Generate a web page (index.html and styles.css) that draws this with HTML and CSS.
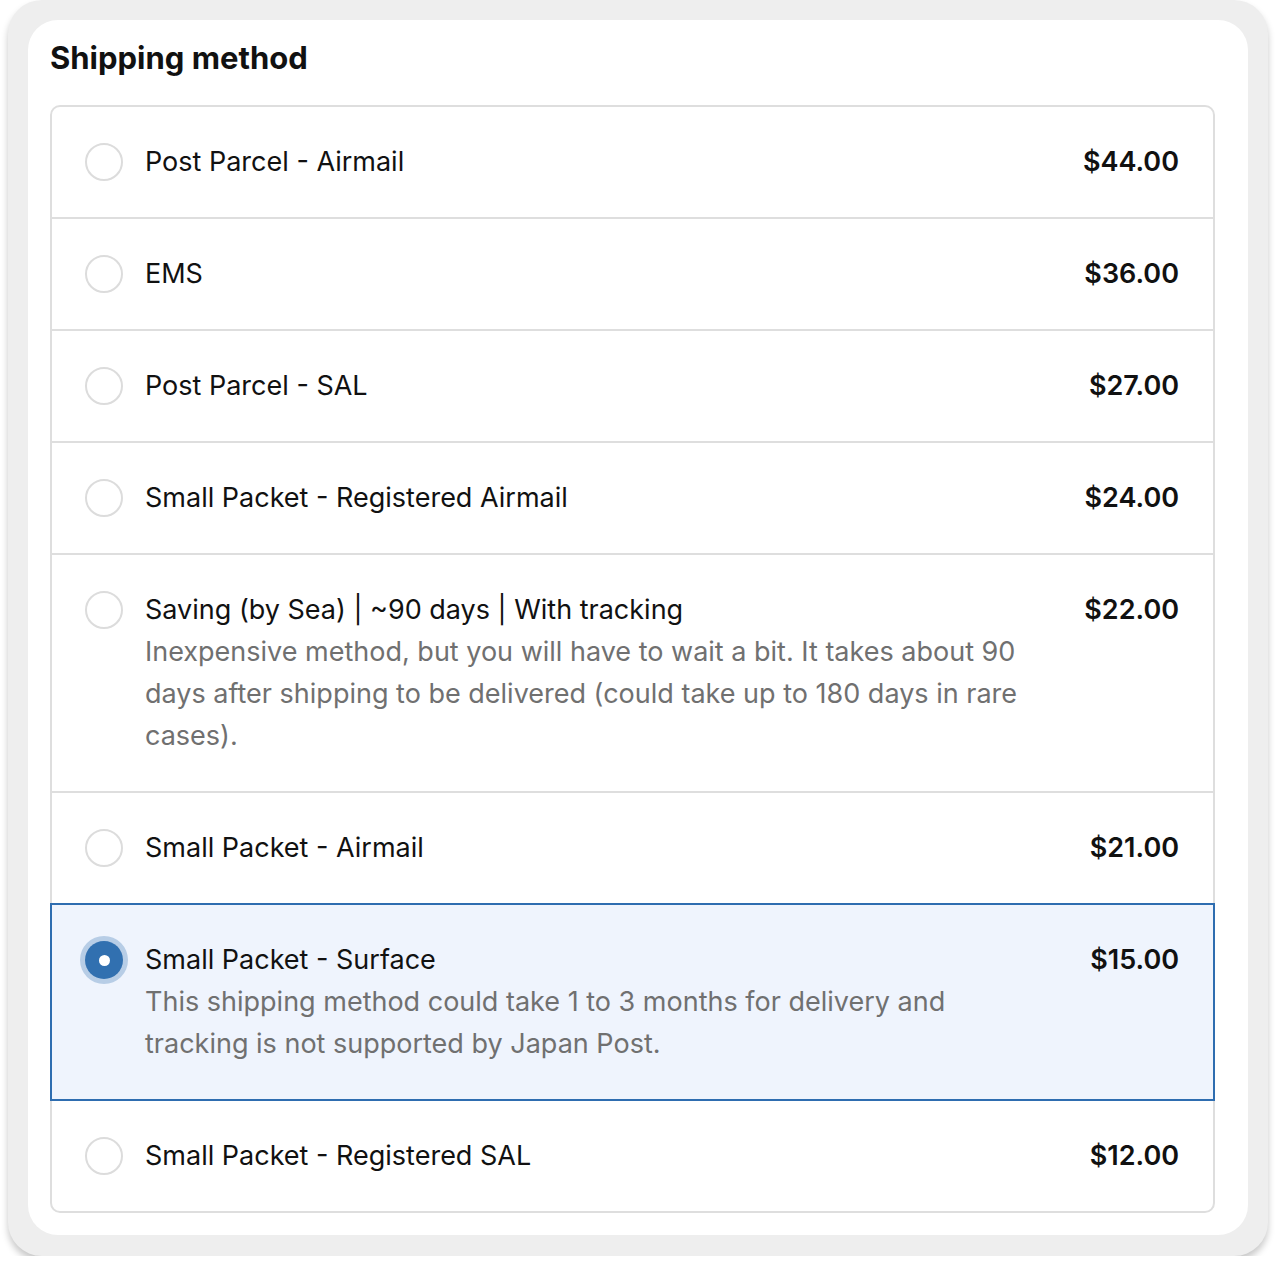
FILE: index.html
```html
<!DOCTYPE html>
<html lang="en">
<head>
<meta charset="utf-8">
<title>Shipping method</title>
<link rel="stylesheet" href="styles.css">
</head>
<body>
<div class="frame">
  <div class="card">
    <h2 class="title">Shipping method</h2>
    <div class="list">
      <div class="row"><span class="radio"></span><div class="info"><div class="name">Post Parcel - Airmail</div></div><div class="price">$44.00</div></div>
      <div class="row"><span class="radio"></span><div class="info"><div class="name">EMS</div></div><div class="price">$36.00</div></div>
      <div class="row"><span class="radio"></span><div class="info"><div class="name">Post Parcel - SAL</div></div><div class="price">$27.00</div></div>
      <div class="row"><span class="radio"></span><div class="info"><div class="name">Small Packet - Registered Airmail</div></div><div class="price">$24.00</div></div>
      <div class="row"><span class="radio"></span><div class="info"><div class="name">Saving (by Sea) | ~90 days | With tracking</div><div class="desc">Inexpensive method, but you will have to wait a bit. It takes about 90 days after shipping to be delivered (could take up to 180 days in rare cases).</div></div><div class="price">$22.00</div></div>
      <div class="row"><span class="radio"></span><div class="info"><div class="name">Small Packet - Airmail</div></div><div class="price">$21.00</div></div>
      <div class="row selected"><span class="radio checked"></span><div class="info"><div class="name">Small Packet - Surface</div><div class="desc">This shipping method could take 1 to 3 months for delivery and tracking is not supported by Japan Post.</div></div><div class="price">$15.00</div></div>
      <div class="row"><span class="radio"></span><div class="info"><div class="name">Small Packet - Registered SAL</div></div><div class="price">$12.00</div></div>
    </div>
  </div>
</div>
</body>
</html>
```

FILE: styles.css
```css
* { box-sizing: border-box; }
html, body { margin: 0; padding: 0; background: #ffffff; }
body {
  font-family: Inter, "Noto Sans", "Liberation Sans", sans-serif;
  color: #111;
  padding: 0 8px;
}
.frame {
  width: 1260px;
  height: 1256px;
  background: #eeeeee;
  border-radius: 34px;
  padding: 20px;
  box-shadow: 0 5px 7px rgba(0, 0, 0, 0.22);
}
.card {
  background: #ffffff;
  border-radius: 30px;
  height: 1215px;
  padding: 18px 33px 0 22px;
}
.title {
  margin: 0 0 27px;
  font-size: 31px;
  line-height: 40px;
  font-weight: 700;
  color: #111;
}
.list {
  border: 2px solid #dedede;
  border-radius: 10px;
}
.row {
  display: flex;
  align-items: flex-start;
  padding: 34px 34px 34px 33px;
  border-top: 2px solid #dedede;
  font-size: 27px;
  line-height: 42px;
}
.row:first-child { border-top: none; }
.row.selected {
  background: #eff4fd;
  border: 2px solid #2e6db0;
  margin: 0 -2px;
}
.row.selected + .row { border-top: none; }
.radio {
  flex: 0 0 38px;
  width: 38px;
  height: 38px;
  margin-top: 2px;
  margin-right: 22px;
  border: 2px solid #dcdcdc;
  border-radius: 50%;
  background: #fff;
}
.radio.checked {
  border: none;
  background: #3170b0;
  box-shadow: 0 0 0 5px #b7cde6;
  display: flex;
  align-items: center;
  justify-content: center;
}
.radio.checked::after {
  content: "";
  width: 11px;
  height: 11px;
  border-radius: 50%;
  background: #fff;
}
.info { flex: 1; min-width: 0; padding-right: 60px; }
.name { color: #111; }
.desc { color: #707070; }
.price { font-weight: 600; color: #111; white-space: nowrap; }
```
